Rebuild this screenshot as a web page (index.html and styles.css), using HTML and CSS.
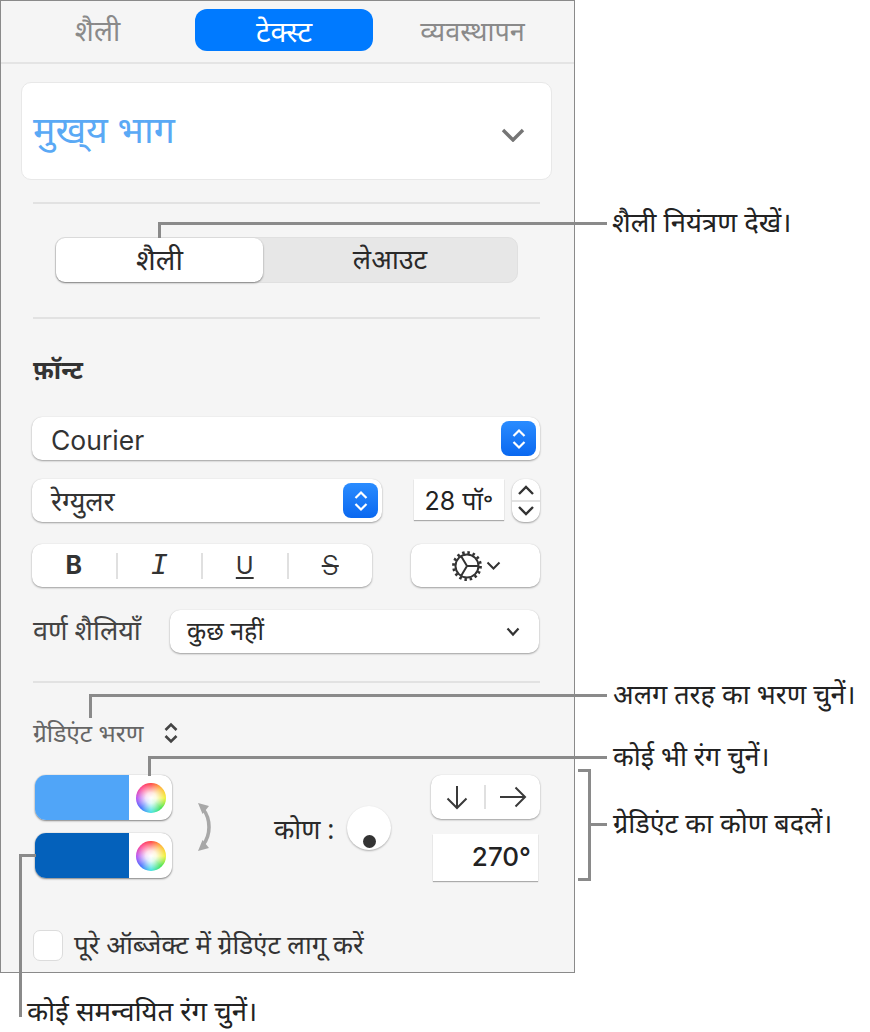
FILE: index.html
```html
<!DOCTYPE html>
<html lang="hi">
<head>
<meta charset="utf-8">
<title>टेक्स्ट</title>
<link rel="stylesheet" href="styles.css">
</head>
<body>
<div class="stage">
  <div class="panel">
    <div class="tabs">
      <span class="tab tab-a">शैली</span>
      <span class="tab tab-b">टेक्स्ट</span>
      <span class="tab tab-c">व्यवस्थापन</span>
    </div>
    <div class="style-card">
      <span class="style-name">मुख्&zwnj;य भाग</span>
      <svg class="card-chev" width="24" height="14" viewBox="0 0 24 14"><path d="M2 2l10 10L22 2" fill="none" stroke="#757575" stroke-width="3.400"/></svg>
    </div>
    <hr class="rule rule-1">
    <div class="segment">
      <span class="seg seg-on">शैली</span>
      <span class="seg seg-off">लेआउट</span>
    </div>
    <hr class="rule rule-2">
    <div class="font-title">फ़ॉन्ट</div>
    <div class="ctl font-select">
      <span class="latin-val">Courier</span>
      <span class="blue-step">
        <svg width="16" height="24" viewBox="0 0 16 24"><path d="M2.500 9L8 3.500 13.500 9M2.500 15L8 20.500 13.500 15" fill="none" stroke="#fff" stroke-width="2.200"/></svg>
      </span>
    </div>
    <div class="row-size">
      <div class="ctl weight-select">
        <span class="weight-val">रेग्युलर</span>
        <span class="blue-step">
          <svg width="16" height="24" viewBox="0 0 16 24"><path d="M2.500 9L8 3.500 13.500 9M2.500 15L8 20.500 13.500 15" fill="none" stroke="#fff" stroke-width="2.200"/></svg>
        </span>
      </div>
      <div class="size-input">28 पॉ॰</div>
      <div class="ctl stepper">
        <svg width="18" height="12" viewBox="0 0 18 12"><path d="M2 10l7-7 7 7" fill="none" stroke="#333" stroke-width="2.400"/></svg>
        <span class="step-line"></span>
        <svg width="18" height="12" viewBox="0 0 18 12"><path d="M2 2l7 7 7-7" fill="none" stroke="#333" stroke-width="2.400"/></svg>
      </div>
    </div>
    <div class="row-format">
      <div class="ctl format-group">
        <span class="fmt fmt-b">B</span><i class="sep"></i>
        <span class="fmt fmt-i">I</span><i class="sep"></i>
        <span class="fmt fmt-u">U</span><i class="sep"></i>
        <span class="fmt fmt-s">S</span>
      </div>
      <div class="ctl gear-btn">
        <svg width="34" height="34" viewBox="0 0 34 34">
          <circle cx="17" cy="17" r="11.500" fill="none" stroke="#333" stroke-width="2"/>
          <circle cx="17" cy="17" r="13.500" fill="none" stroke="#333" stroke-width="2.800" stroke-dasharray="2.500 2.800"/>
          <path d="M17 17H29M17 17L11 7M17 17L11 27" fill="none" stroke="#333" stroke-width="2"/>
        </svg>
        <svg width="15" height="10" viewBox="0 0 15 10"><path d="M1.500 1.500l6 6 6-6" fill="none" stroke="#333" stroke-width="2"/></svg>
      </div>
    </div>
    <div class="row-char">
      <span class="char-label">वर्ण शैलियाँ</span>
      <div class="ctl char-select">
        <span class="char-val">कुछ नहीं</span>
        <svg width="14" height="10" viewBox="0 0 14 10"><path d="M1.500 1.500L7 7.500l5.500-6" fill="none" stroke="#333" stroke-width="2.200"/></svg>
      </div>
    </div>
    <hr class="rule rule-3">
    <div class="fill-row">
      <span class="fill-label">ग्रेडिएंट भरण</span>
      <svg width="16" height="24" viewBox="0 0 16 24"><path d="M2.500 9L8 3.500 13.500 9M2.500 15L8 20.500 13.500 15" fill="none" stroke="#444" stroke-width="2.600"/></svg>
    </div>
    <div class="grad-row">
      <div class="wells">
        <div class="well"><span class="swatch swatch-light"></span><span class="wheel-box"><span class="wheel"></span></span></div>
        <div class="well"><span class="swatch swatch-dark"></span><span class="wheel-box"><span class="wheel"></span></span></div>
      </div>
      <svg class="swap" width="22" height="50" viewBox="0 0 22 50">
        <path d="M7 7C15 17 15 33 7 43" fill="none" stroke="#a8a8a8" stroke-width="3.600"/>
        <path d="M2 1l11 3-6.500 8zM2 49l11-3-6.500-8z" fill="#a8a8a8"/>
      </svg>
      <span class="angle-label">कोण :</span>
      <span class="dial"><span class="dial-dot"></span></span>
      <div class="angle-col">
        <div class="ctl arrows">
          <svg width="26" height="28" viewBox="0 0 26 28"><path d="M13 3V25M3.500 15.500L13 25l9.500-9.500" fill="none" stroke="#3a3a3a" stroke-width="2"/></svg>
          <i class="sep sep-arrow"></i>
          <svg width="28" height="26" viewBox="0 0 28 26"><path d="M1 13H26M16.500 3.500L26 13l-9.500 9.500" fill="none" stroke="#3a3a3a" stroke-width="2"/></svg>
        </div>
        <div class="angle-input">270°</div>
      </div>
    </div>
    <div class="check-row">
      <span class="checkbox"></span>
      <span class="check-label">पूरे ऑब्जेक्ट में ग्रेडिएंट लागू करें</span>
    </div>
  </div>

  <div class="leader l1-v"></div><div class="leader l1-h"></div>
  <div class="note n1">शैली नियंत्रण देखें।</div>
  <div class="leader l2-v"></div><div class="leader l2-h"></div>
  <div class="note n2">अलग तरह का भरण चुनें।</div>
  <div class="leader l3-v"></div><div class="leader l3-h"></div>
  <div class="note n3">कोई भी रंग चुनें।</div>
  <div class="bracket"></div><div class="leader l4-h"></div>
  <div class="note n4">ग्रेडिएंट का कोण बदलें।</div>
  <div class="leader l5-h"></div><div class="leader l5-v"></div>
  <div class="note n5">कोई समन्वयित रंग चुनें।</div>
</div>
</body>
</html>
```

FILE: styles.css
```css
* { box-sizing: border-box; }
html, body { margin: 0; padding: 0; background: #fff; }
body { font-family: "Noto Sans", "Noto Sans Devanagari", "Lohit Devanagari", "FreeSans", Roboto, sans-serif; color: #2a2a2a; }
.stage { position: relative; width: 870px; height: 1032px; overflow: hidden; }

.panel { width: 575px; height: 973px; background: #f5f5f5; border: 1px solid #8a8a8a; }

.tabs { height: 63px; display: flex; align-items: flex-start; border-bottom: 2px solid #e4e4e4; padding-top: 8px; }
.tab { height: 42px; display: flex; align-items: center; justify-content: center; font-size: 28px; color: #8a8a8a; white-space: nowrap; }
.tab-a { width: 193px; }
.tab-b { width: 178px; margin-left: 1px; background: #007aff; color: #fff; border-radius: 12px; font-size: 29px; }
.tab-c { width: 200px; font-size: 27px; padding-right: 1px; }

.style-card { margin: 18px 0 0 20px; width: 531px; height: 98px; background: #fff; border: 1px solid #e8e8e8; border-radius: 10px; display: flex; align-items: center; justify-content: space-between; padding: 0 26px 0 11px; }
.style-name { font-size: 37.500px; color: #5aa9f5; line-height: 1; margin-top: -4px; white-space: nowrap; }
.card-chev { margin-top: 8px; }

.rule { border: 0; height: 2px; background: #e2e2e2; margin: 0 0 0 32px; width: 507px; }
.rule-1 { margin-top: 22px; }
.rule-2 { margin-top: 34px; }
.rule-3 { margin-top: 28px; }

.segment { margin: 33px 0 0 54px; width: 463px; height: 46px; background: #e7e7e7; border-radius: 10px; display: flex; border: 1px solid #e0e0e0; }
.seg { display: flex; align-items: center; justify-content: center; font-size: 27px; color: #2a2a2a; margin-top: -3px; }
.seg-on { width: 207px; height: 44px; background: #fff; border-radius: 9px; box-shadow: 0 1px 2px rgba(0,0,0,.45); margin-top: 0; padding-bottom: 4px; font-size: 29px; }
.seg-off { flex: 1; }

.font-title { margin: 32px 0 0 32px; height: 36px; line-height: 36px; font-size: 25px; font-weight: 700; color: #333; }

.ctl { background: #fff; border-radius: 10px; box-shadow: 0 1px 2px rgba(0,0,0,.35), 0 0 1px rgba(0,0,0,.12); }
.font-select { margin: 30px 0 0 31px; width: 508px; height: 43px; display: flex; align-items: center; justify-content: space-between; padding: 0 4px 0 19px; }
.latin-val { font-family: Inter, Roboto, "Liberation Sans", sans-serif; font-size: 26.500px; color: #333; margin-top: 2px; }
.blue-step { width: 35px; height: 35px; border-radius: 8px; background: linear-gradient(#2a8cff, #0a68f0); display: flex; align-items: center; justify-content: center; }

.row-size { margin: 19px 0 0 31px; display: flex; align-items: flex-start; }
.weight-select { width: 350px; height: 43px; display: flex; align-items: center; justify-content: space-between; padding: 0 4px 0 19px; }
.weight-val { font-size: 27px; color: #333; margin-top: -1px; }
.size-input { margin-left: 32px; width: 90px; height: 41px; background: #fff; box-shadow: 0 1px 1px rgba(0,0,0,.3); font-family: Inter, "Noto Sans", sans-serif; font-size: 25px; line-height: 44px; text-align: center; color: #222; white-space: nowrap; }
.stepper { margin-left: 8px; width: 28px; height: 43px; border-radius: 12px; display: flex; flex-direction: column; align-items: center; justify-content: space-between; padding: 5px 0; }
.step-line { width: 100%; height: 2px; background: #e2e2e2; }

.row-format { margin: 22px 0 0 31px; display: flex; }
.format-group { width: 340px; height: 43px; display: flex; align-items: center; }
.fmt { flex: 1; text-align: center; font-family: Inter, "Liberation Sans", sans-serif; font-size: 24px; line-height: 43px; color: #333; }
.fmt-b { font-weight: 700; font-size: 25px; }
.fmt-i { font-family: "Liberation Mono", monospace; font-style: italic; font-size: 29px; padding-top: 2px; }
.fmt-u { text-decoration: underline; text-underline-offset: 3px; }
.fmt-s { text-decoration: line-through; font-size: 27px; font-weight: 300; }
.sep { display: block; width: 2px; height: 26px; background: #e0e0e0; flex: none; }
.gear-btn { margin-left: 39px; width: 129px; height: 43px; display: flex; align-items: center; justify-content: center; gap: 2px; }

.row-char { margin: 23px 0 0 32px; display: flex; align-items: center; }
.char-label { width: 137px; font-size: 27px; color: #444; white-space: nowrap; margin-top: -4px; }
.char-select { width: 369px; height: 43px; display: flex; align-items: center; justify-content: space-between; padding: 0 19px 0 17px; }
.char-val { font-size: 25px; color: #2a2a2a; margin-top: -4px; }

.fill-row { margin: 35px 0 0 32px; height: 30px; display: flex; align-items: center; gap: 19px; }
.fill-label { font-size: 24.500px; color: #666; white-space: nowrap; margin-top: -2px; }

.grad-row { margin: 27px 0 0 0; height: 106px; display: flex; align-items: flex-start; padding-left: 34px; }
.wells { width: 137px; display: flex; flex-direction: column; gap: 13px; flex: none; }
.well { height: 45px; display: flex; border-radius: 11px; overflow: hidden; background: #fff; box-shadow: 0 1px 2px rgba(0,0,0,.45), 0 0 1px rgba(0,0,0,.3); }
.swatch { width: 94px; height: 100%; display: block; }
.swatch-light { background: #50a5f8; }
.swatch-dark { background: #0461bb; }
.wheel-box { flex: 1; display: flex; align-items: center; justify-content: center; }
.wheel { width: 30px; height: 30px; border-radius: 50%; background: radial-gradient(circle, #fff 0%, rgba(255,255,255,.85) 25%, rgba(255,255,255,0) 75%), conic-gradient(from 0deg, #ff3030, #ffb020, #f0f020, #30e040, #30e0e0, #3060ff, #b040f0, #ff3080, #ff3030); }
.swap { margin: 27px 0 0 24px; flex: none; }
.angle-label { margin: 36px 0 0 56px; width: 73px; font-size: 26.500px; color: #2a2a2a; white-space: nowrap; flex: none; }
.dial { margin: 31px 0 0 0; width: 44px; height: 44px; border-radius: 50%; background: #fff; box-shadow: 0 1px 2px rgba(0,0,0,.3); display: flex; justify-content: center; align-items: flex-end; padding-bottom: 2px; flex: none; }
.dial-dot { width: 13px; height: 13px; border-radius: 50%; background: #333; display: block; }
.angle-col { margin-left: 40px; width: 109px; display: flex; flex-direction: column; align-items: center; flex: none; }
.arrows { width: 109px; height: 44px; display: flex; align-items: center; justify-content: space-between; padding: 0 13px; }
.sep-arrow { height: 24px; }
.angle-input { margin-top: 15px; width: 105px; height: 47px; background: #fff; box-shadow: 0 1px 1px rgba(0,0,0,.3); font-family: Inter, "Liberation Sans", sans-serif; font-weight: 500; font-size: 26px; line-height: 45px; text-align: right; padding-right: 7px; color: #222; }

.check-row { margin: 47px 0 0 32px; display: flex; align-items: center; gap: 11px; }
.checkbox { width: 30px; height: 31px; background: #fff; border: 1px solid #dcdcdc; border-radius: 7px; flex: none; }
.check-label { font-size: 26px; color: #333; white-space: nowrap; margin-top: -2px; }

.leader { position: absolute; background: #8a8a8a; }
.note { position: absolute; font-size: 27px; line-height: 32px; color: #222; white-space: nowrap; }
.l1-v { left: 158px; top: 222px; width: 3px; height: 16px; }
.l1-h { left: 158px; top: 222px; width: 449px; height: 3px; }
.n1 { left: 612px; top: 206px; font-size: 27.500px; }
.l2-v { left: 89px; top: 694px; width: 3px; height: 24px; }
.l2-h { left: 89px; top: 694px; width: 518px; height: 3px; }
.n2 { left: 613px; top: 678px; }
.l3-v { left: 148px; top: 756px; width: 3px; height: 20px; }
.l3-h { left: 148px; top: 756px; width: 459px; height: 3px; }
.n3 { left: 613px; top: 740px; }
.bracket { position: absolute; left: 578px; top: 769px; width: 13px; height: 112px; border: 3px solid #8a8a8a; border-left: 0; }
.l4-h { left: 590px; top: 823px; width: 17px; height: 3px; }
.n4 { left: 613px; top: 807px; }
.l5-h { left: 19px; top: 854px; width: 17px; height: 3px; }
.l5-v { left: 19px; top: 854px; width: 3px; height: 163px; }
.n5 { left: 27px; top: 995px; font-size: 27.500px; }
```
